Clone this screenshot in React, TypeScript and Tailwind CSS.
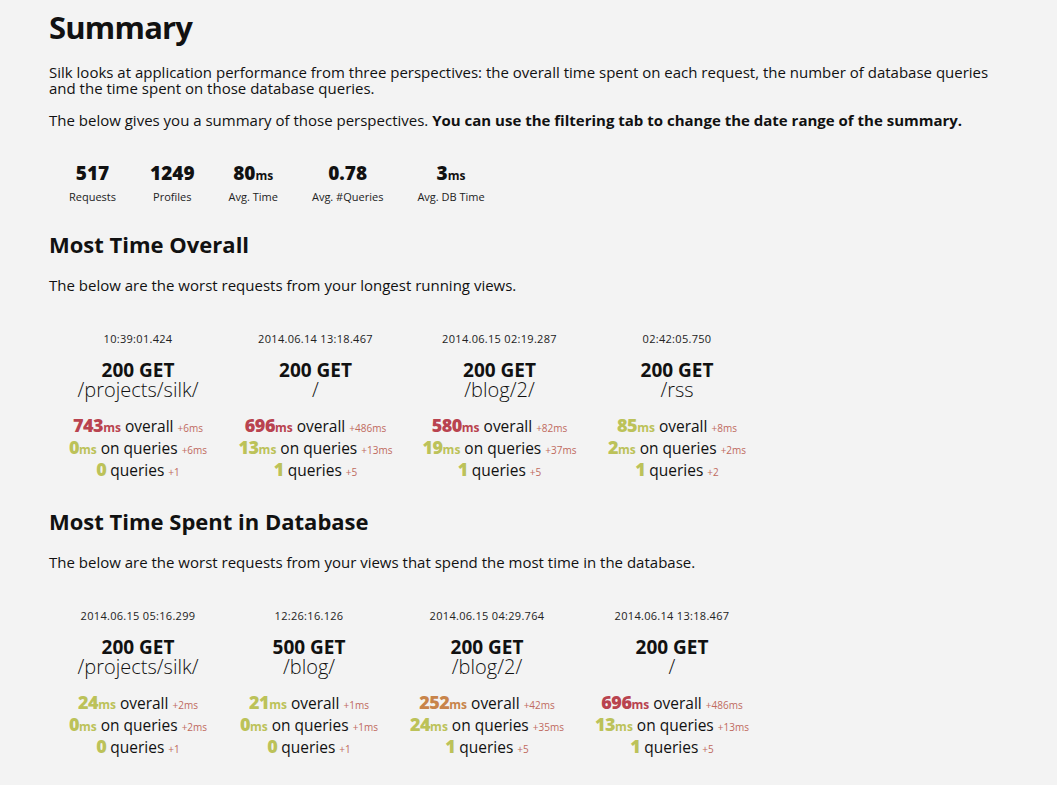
import React from 'react';

const RED = 'text-[#b9434f]';
const GREEN = 'text-[#bcc259]';
const ORANGE = 'text-[#c8844a]';

type Metric = { n: string; c: string };
type Card = {
  w: string;
  time: string;
  status: string;
  path: string;
  overall: Metric;
  overallDelta: string;
  dbTime: Metric;
  dbDelta: string;
  queries: Metric;
  queriesDelta: string;
};

const overallCards: Card[] = [
  { w: 'w-[178px]', time: '10:39:01.424', status: '200 GET', path: '/projects/silk/', overall: { n: '743', c: RED }, overallDelta: '+6', dbTime: { n: '0', c: GREEN }, dbDelta: '+6', queries: { n: '0', c: GREEN }, queriesDelta: '+1' },
  { w: 'w-[177px]', time: '2014.06.14 13:18.467', status: '200 GET', path: '/', overall: { n: '696', c: RED }, overallDelta: '+486', dbTime: { n: '13', c: GREEN }, dbDelta: '+13', queries: { n: '1', c: GREEN }, queriesDelta: '+5' },
  { w: 'w-[191px]', time: '2014.06.15 02:19.287', status: '200 GET', path: '/blog/2/', overall: { n: '580', c: RED }, overallDelta: '+82', dbTime: { n: '19', c: GREEN }, dbDelta: '+37', queries: { n: '1', c: GREEN }, queriesDelta: '+5' },
  { w: 'w-[164px]', time: '02:42:05.750', status: '200 GET', path: '/rss', overall: { n: '85', c: GREEN }, overallDelta: '+8', dbTime: { n: '2', c: GREEN }, dbDelta: '+2', queries: { n: '1', c: GREEN }, queriesDelta: '+2' },
];

const dbCards: Card[] = [
  { w: 'w-[178px]', time: '2014.06.15 05:16.299', status: '200 GET', path: '/projects/silk/', overall: { n: '24', c: GREEN }, overallDelta: '+2', dbTime: { n: '0', c: GREEN }, dbDelta: '+2', queries: { n: '0', c: GREEN }, queriesDelta: '+1' },
  { w: 'w-[164px]', time: '12:26:16.126', status: '500 GET', path: '/blog/', overall: { n: '21', c: GREEN }, overallDelta: '+1', dbTime: { n: '0', c: GREEN }, dbDelta: '+1', queries: { n: '0', c: GREEN }, queriesDelta: '+1' },
  { w: 'w-[192px]', time: '2014.06.15 04:29.764', status: '200 GET', path: '/blog/2/', overall: { n: '252', c: ORANGE }, overallDelta: '+42', dbTime: { n: '24', c: GREEN }, dbDelta: '+35', queries: { n: '1', c: GREEN }, queriesDelta: '+5' },
  { w: 'w-[178px]', time: '2014.06.14 13:18.467', status: '200 GET', path: '/', overall: { n: '696', c: RED }, overallDelta: '+486', dbTime: { n: '13', c: GREEN }, dbDelta: '+13', queries: { n: '1', c: GREEN }, queriesDelta: '+5' },
];

const stats = [
  { value: '517', unit: '', label: 'Requests' },
  { value: '1249', unit: '', label: 'Profiles' },
  { value: '80', unit: 'ms', label: 'Avg. Time' },
  { value: '0.78', unit: '', label: 'Avg. #Queries' },
  { value: '3', unit: 'ms', label: 'Avg. DB Time' },
];

const Delta = ({ v, ms }: { v: string; ms?: boolean }) => (
  <span className="text-[10px] leading-none text-[#c06a5e]">
    {v}
    {ms && 'ms'}
  </span>
);

const Big = ({ m, ms }: { m: Metric; ms?: boolean }) => (
  <>
    <span className={`${m.c} font-extrabold text-[18px] leading-none tracking-[-0.5px]`}>{m.n}</span>
    {ms && <span className={`${m.c} font-bold text-[12px] leading-none`}>ms</span>}
  </>
);

const RequestCard = ({ card }: { card: Card }) => (
  <div className={`${card.w} flex flex-col items-center text-center`}>
    <div className="text-[11px] leading-[16px] text-[#222] tracking-[0.3px]">{card.time}</div>
    <div className="mt-[13px] text-[19px] leading-[20px] font-bold">{card.status}</div>
    <div className="text-[20px] leading-[20px] font-light">{card.path}</div>
    <div className="mt-[15px] text-[15.5px] leading-[22px] whitespace-nowrap">
      <div className="h-[22px]">
        <Big m={card.overall} ms /> overall <Delta v={card.overallDelta} ms />
      </div>
      <div className="h-[22px]">
        <Big m={card.dbTime} ms /> on queries <Delta v={card.dbDelta} ms />
      </div>
      <div className="h-[22px]">
        <Big m={card.queries} /> queries <Delta v={card.queriesDelta} />
      </div>
    </div>
  </div>
);

const Section = ({ title, text, cards, first }: { title: string; text: string; cards: Card[]; first?: boolean }) => (
  <section className={first ? 'mt-[24px]' : 'mt-[25px]'}>
    <h2 className="text-[22px] leading-[30px] font-bold">{title}</h2>
    <p className="mt-[16px] text-[15px] leading-[20px]">{text}</p>
    <div className="mt-[36px] flex">
      {cards.map((c, i) => (
        <RequestCard key={i} card={c} />
      ))}
    </div>
  </section>
);

export default function App() {
  return (
    <div className="min-h-[785px] bg-[#f3f3f3] text-[#111] pl-[49px] pt-[7px] font-['Open_Sans',sans-serif]">
      <h1 className="text-[31px] leading-[40px] font-bold tracking-[-0.8px]">Summary</h1>
      <p className="mt-[17px] w-[960px] text-[15px] leading-[16px]">
        Silk looks at application performance from three perspectives: the overall time spent on each request, the number of database queries and the time spent on those database queries.
      </p>
      <p className="mt-[16px] text-[15px] leading-[16px]">
        The below gives you a summary of those perspectives.{' '}
        <strong className="font-bold">You can use the filtering tab to change the date range of the summary.</strong>
      </p>

      <div className="mt-[33px] flex gap-[34px] pl-[20px]">
        {stats.map((s) => (
          <div key={s.label} className="flex flex-col items-center">
            <div className="h-[24px] text-[19px] leading-[24px] font-extrabold">
              {s.value}
              {s.unit && <span className="text-[12px] leading-none font-bold">{s.unit}</span>}
            </div>
            <div className="mt-[4px] text-[11px] leading-[16px] text-[#222]">{s.label}</div>
          </div>
        ))}
      </div>

      <Section
        first
        title="Most Time Overall"
        text="The below are the worst requests from your longest running views."
        cards={overallCards}
      />
      <Section
        title="Most Time Spent in Database"
        text="The below are the worst requests from your views that spend the most time in the database."
        cards={dbCards}
      />
    </div>
  );
}
